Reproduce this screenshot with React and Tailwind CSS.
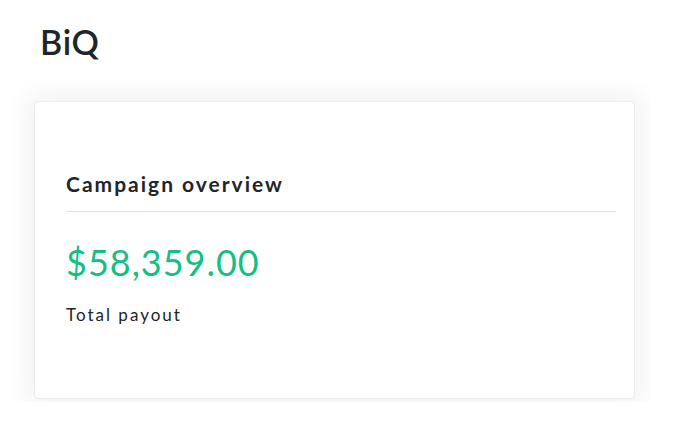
export default function App() {
  return (
    <main className="w-[688px] h-[436px] bg-white font-['Lato',sans-serif] text-[#212529] overflow-hidden">
      <div className="px-10 pt-[22px]">
        <h1 className="text-[34px] leading-[40px] font-semibold tracking-[0.8px]">BiQ</h1>
      </div>
      <div className="w-[651px] h-[340px] overflow-hidden pt-[39px] pl-[34px]">
        <div className="w-[601px] h-[298px] bg-white rounded-[4px] border border-[#ececec] shadow-[0_0_24px_8px_rgba(0,0,0,0.05)] pl-[31px] pr-[18px] pt-[70px]">
          <h2 className="text-[21px] leading-[24px] font-bold tracking-[2px]">Campaign overview</h2>
          <div className="mt-[15px] border-t border-[#e2e2e2]"></div>
          <div className="mt-[30px] text-[36px] leading-[40px] text-[#14bf83] tracking-[1px]">$58,359.00</div>
          <div className="mt-[23px] text-[17px] leading-[20px] tracking-[2px]">Total payout</div>
        </div>
      </div>
    </main>
  );
}
